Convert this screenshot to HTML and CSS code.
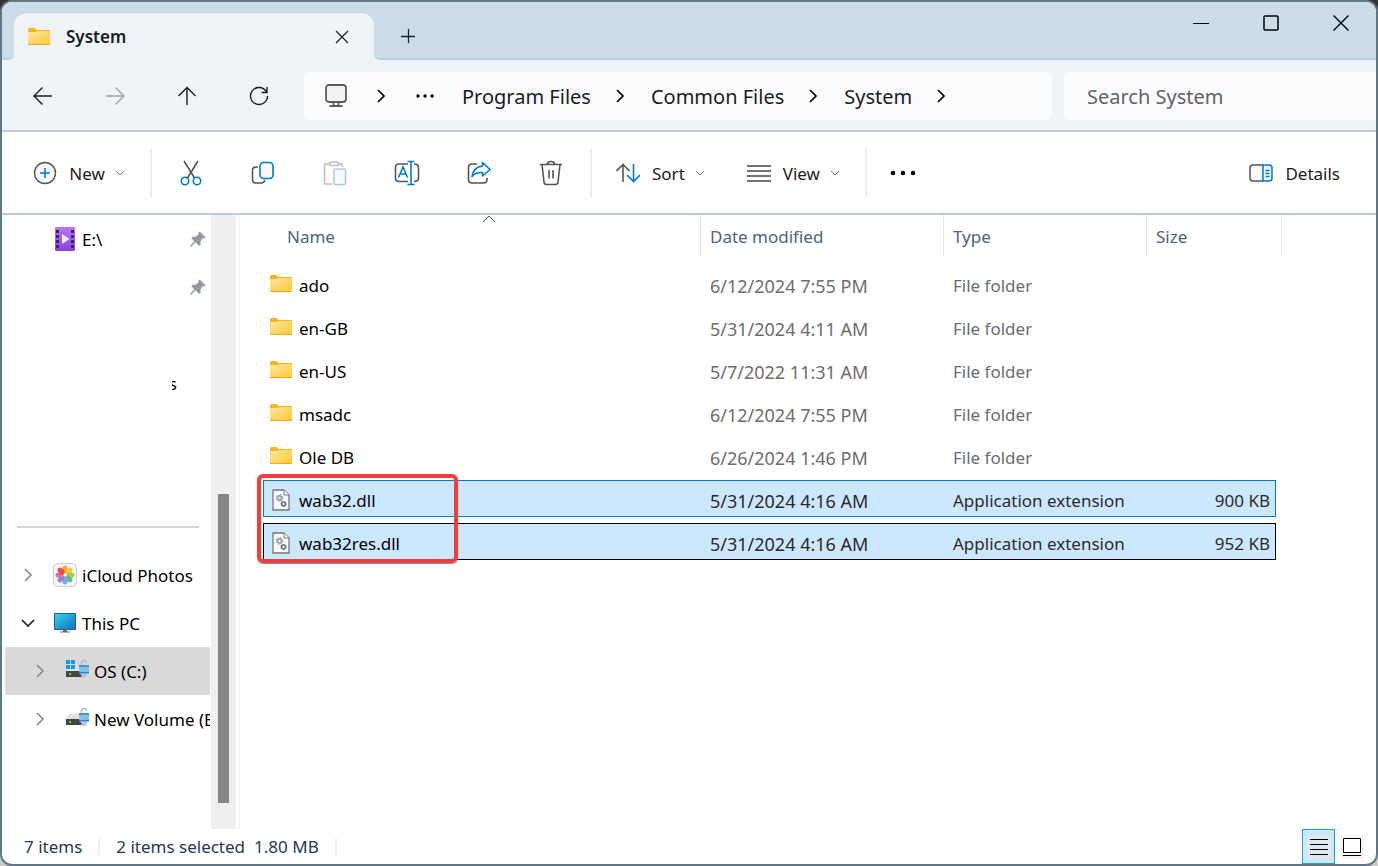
FILE: index.html
```html
<!DOCTYPE html>
<html lang="en">
<head>
    <meta charset="utf-8">
    <meta name="viewport" content="width=device-width, initial-scale=1.0">
    <title>System</title>
    <link rel="stylesheet" href="styles.css">
</head>

<body>
    <!-- shared icons -->
    <svg class="symbols" aria-hidden="true">
        <defs>
            <linearGradient id="folder-fill" x1="0" y1="0" x2="1" y2="1">
                <stop offset="0" stop-color="#ffe69f" />
                <stop offset="1" stop-color="#ffca38" />
            </linearGradient>
            <linearGradient id="screen-fill" x1="0" y1="0" x2="1" y2="1">
                <stop offset="0" stop-color="#34d5e8" />
                <stop offset="1" stop-color="#0d70c4" />
            </linearGradient>
            <linearGradient id="video-fill" x1="0" y1="0" x2="0" y2="1">
                <stop offset="0" stop-color="#b877f5" />
                <stop offset="1" stop-color="#8a42e4" />
            </linearGradient>
        </defs>
        <symbol id="folder" viewBox="0 0 24 18">
            <path d="M1 1.500Q1 0 2.500 0H7.500L9.500 2H23V5H1Z" fill="#f8b51b" />
            <path d="M1 4H8L10 3H23V16H1Z" fill="url(#folder-fill)" />
            <path d="M1 16.500H23" stroke="#efa91d" />
        </symbol>
        <symbol id="chevron" viewBox="0 0 14 14">
            <path d="M4 1L10 7L4 13" fill="none" stroke="currentColor" stroke-width="1.700" />
        </symbol>
        <symbol id="caret" viewBox="0 0 10 6">
            <path d="M1 1L5 5L9 1" fill="none" stroke="currentColor" />
        </symbol>
        <symbol id="pin" viewBox="0 0 16 16">
            <path d="M9.500 0.500L15.500 6L14 7.500L12.500 7.300L10.500 10.500L10.500 14L9 15L5.500 11.300L1.500 15.500L0.300 15.800L0.500 14.500L4.300 10.300L1.300 7L2.500 5.800L5.500 5.700L8.700 3.300L8.500 1.500Z" fill="#8f9ba3" />
        </symbol>
        <symbol id="dll" viewBox="0 0 18 22">
            <path d="M1 1H12L17 6V21H1Z" fill="#fbfbfb" stroke="#777" stroke-width="1.300" />
            <path d="M12 1V6H17" fill="#fff" stroke="#777" />
            <circle cx="7.500" cy="9" r="2" fill="none" stroke="#9aa5b0" stroke-width="1.800" />
            <circle cx="7.500" cy="9" r="3.300" fill="none" stroke="#9aa5b0" stroke-width="1.300" stroke-dasharray="1.400 1.200" />
            <circle cx="11.500" cy="15" r="1.900" fill="none" stroke="#66737c" stroke-width="1.500" />
            <circle cx="11.500" cy="15" r="2.800" fill="none" stroke="#66737c" stroke-width="0.800" stroke-dasharray="1.100 1.100" />
        </symbol>
        <symbol id="drive" viewBox="0 0 24 20">
            <path d="M4 7H18L21 12H1Z" fill="#dfe1e3" />
            <path d="M1 12H18V18H1Z" fill="#454545" />
            <rect x="4" y="14" width="2" height="2" fill="#35e02c" />
            <path d="M16.500 7V3.500Q16.500 1.500 18.500 1.500H19.500Q21.500 1.500 21.500 4" fill="none" stroke="#b3bfc8" stroke-width="1.600" />
            <path d="M14 6H24V14L22 15.500Q21.500 19 19 19Q16.500 19 16 15.500L14 14Z" fill="#b7c4cd" />
            <path d="M14 7H24M14 13.500H24" stroke="#1d86d5" stroke-width="1.400" />
            <path d="M14 8H24V12.500H14Z" fill="#82c0ea" />
        </symbol>
        <symbol id="tiles" viewBox="0 0 10 10">
            <path d="M0 0H4.500V4.500H0ZM5.500 0H10V4.500H5.500ZM0 5.500H4.500V10H0ZM5.500 5.500H10V10H5.500Z" fill="#149be5" />
        </symbol>
    </svg>

    <div class="window">
        <header class="titlebar">
            <div class="edge"></div>
            <div class="tab-holder">
                <div class="tab">
                    <svg class="folder"><use href="#folder" /></svg>
                    <span class="tab-title">System</span>
                    <button class="tab-close" aria-label="Close tab">
                        <svg width="14" height="14" viewBox="0 0 14 14"><path d="M1 1L13 13M13 1L1 13" stroke="#222" stroke-width="1.200" /></svg>
                    </button>
                </div>
            </div>
            <div class="strip">
                <button class="new-tab" aria-label="New tab">
                    <svg width="16" height="16" viewBox="0 0 16 16"><path d="M1 8.500H15M8.500 1V15" stroke="#222" stroke-width="1.300" /></svg>
                </button>
                <div class="controls">
                    <button aria-label="Minimize"><svg width="16" height="16" viewBox="0 0 16 16"><path d="M0 8.500H16" stroke="#000" /></svg></button>
                    <button aria-label="Maximize"><svg width="16" height="16" viewBox="0 0 16 16"><rect x="1" y="1" width="14" height="14" rx="1" fill="none" stroke="#000" stroke-width="1.500" /></svg></button>
                    <button aria-label="Close"><svg width="16" height="16" viewBox="0 0 16 16"><path d="M0.500 0.500L15.500 15.500M15.500 0.500L0.500 15.500" stroke="#000" stroke-width="1.400" /></svg></button>
                </div>
            </div>
        </header>

        <nav class="navbar">
            <div class="nav-buttons">
                <button aria-label="Back"><svg width="20" height="20" viewBox="0 0 20 20"><path d="M19 10H1M9.500 1.500L1 10L9.500 18.500" /></svg></button>
                <button aria-label="Forward" class="off"><svg width="20" height="20" viewBox="0 0 20 20"><path d="M1 10H19M10.500 1.500L19 10L10.500 18.500" /></svg></button>
                <button aria-label="Up"><svg width="20" height="20" viewBox="0 0 20 20"><path d="M10 19V1.500M1.500 10L10 1.500L18.500 10" /></svg></button>
                <button aria-label="Refresh"><svg width="20" height="20" viewBox="0 0 20 20"><path d="M17.500 6A8.500 8.500 0 1 0 18.500 10M18 1V6.500H12.500" /></svg></button>
            </div>
            <ul class="address">
                <li class="pc">
                    <svg width="24" height="24" viewBox="0 0 24 24"><rect x="2" y="1" width="20" height="17" rx="3" fill="#f3f3f3" stroke="#5c5c5c" stroke-width="1.800" /><path d="M9.500 18V21.500M14.500 18V21.500M5.500 22H18.500" stroke="#5c5c5c" stroke-width="1.800" /></svg>
                </li>
                <li class="sep"><svg class="chevron"><use href="#chevron" /></svg></li>
                <li class="dots"><svg width="18" height="4" viewBox="0 0 18 4"><circle cx="2" cy="2" r="1.700" /><circle cx="9" cy="2" r="1.700" /><circle cx="16" cy="2" r="1.700" /></svg></li>
                <li><a href="#">Program Files</a></li>
                <li class="sep"><svg class="chevron"><use href="#chevron" /></svg></li>
                <li><a href="#">Common Files</a></li>
                <li class="sep"><svg class="chevron"><use href="#chevron" /></svg></li>
                <li><a href="#">System</a></li>
                <li class="sep"><svg class="chevron"><use href="#chevron" /></svg></li>
            </ul>
            <input class="search" type="text" placeholder="Search System" aria-label="Search System">
        </nav>

        <div class="commands">
            <button class="new">
                <svg width="24" height="24" viewBox="0 0 24 24"><circle cx="12" cy="12" r="10.500" fill="#fafafa" stroke="#555" stroke-width="1.400" /><path d="M7 12H17M12 7V17" stroke="#0078d4" stroke-width="1.600" /></svg>
                <span>New</span>
                <svg class="caret"><use href="#caret" /></svg>
            </button>
            <div class="icons">
                <button aria-label="Cut"><svg width="26" height="26" viewBox="0 0 26 26" fill="none" stroke-width="1.600"><path d="M6 1L16.500 18M20 1L9.500 18" stroke="#555" /><circle cx="7" cy="21" r="3.700" stroke="#0078d4" /><circle cx="19" cy="21" r="3.700" stroke="#0078d4" /></svg></button>
                <button aria-label="Copy"><svg width="26" height="26" viewBox="0 0 26 26" fill="none" stroke-width="1.600"><path d="M8 7H6Q2.500 7 2.500 10.500V19.500Q2.500 23 6 23H11Q14.500 23 14.500 20" stroke="#555" /><rect x="10" y="2.500" width="13" height="16" rx="3.500" fill="#fafafa" stroke="#0078d4" /></svg></button>
                <button aria-label="Paste"><svg width="26" height="26" viewBox="0 0 26 26" fill="none" stroke-width="1.600"><path d="M7.500 4H2.500V24H10M16 4H20V7" stroke="#bdbdbd" /><rect x="7.500" y="2" width="9" height="3.500" rx="1.700" stroke="#bdbdbd" /><rect x="12" y="9" width="11.500" height="15.500" rx="1.500" fill="#fafafa" stroke="#9fccf0" /></svg></button>
                <button aria-label="Rename"><svg width="26" height="26" viewBox="0 0 26 26" fill="none" stroke-width="1.600"><path d="M14 4H5Q1.500 4 1.500 7.500V18Q1.500 21.500 5 21.500H14M20 4Q24.500 4 24.500 7.500V18Q24.500 21.500 20 21.500" stroke="#555" /><path d="M17 1.500V24.500M13.500 1.500H20.500M13.500 24.500H20.500M4.500 17.500L9 7L13.500 17.500M6 14H12" stroke="#0078d4" /></svg></button>
                <button aria-label="Share"><svg width="26" height="26" viewBox="0 0 26 26" fill="none" stroke-width="1.600" stroke-linejoin="round"><path d="M11 4H6Q2.500 4 2.500 7.500V19.500Q2.500 23 6 23H17.500Q21 23 21 19.500V18" stroke="#555" /><path d="M16.500 2.500L24 9.500L16.500 16V12.500Q9.500 12 6 16.500Q7.500 7 16.500 6Z" fill="#fff" stroke="#0078d4" /></svg></button>
                <button aria-label="Delete"><svg width="26" height="26" viewBox="0 0 26 26" fill="none" stroke="#555" stroke-width="1.600"><path d="M2 4.500H24M9.500 4Q9.500 1.500 13 1.500Q16.500 1.500 16.500 4M4 4.500L6 22Q6.300 24.500 8.500 24.500H17.500Q19.700 24.500 20 22L22 4.500M11 10V18.500M15 10V18.500" /></svg></button>
            </div>
            <div class="layout">
                <button>
                    <svg width="24" height="20" viewBox="0 0 24 20" fill="none" stroke-width="1.600"><path d="M7 19V1.500M0.500 8L7 1.500L13.500 8" stroke="#555" /><path d="M17.500 1V18.500M11 12L17.500 18.500L24 12" stroke="#0078d4" /></svg>
                    <span>Sort</span>
                    <svg class="caret"><use href="#caret" /></svg>
                </button>
                <button>
                    <svg width="24" height="18" viewBox="0 0 24 18"><path d="M0 2H24M0 7H24M0 12H24M0 17H24" stroke="#444" stroke-width="1.400" /></svg>
                    <span>View</span>
                    <svg class="caret"><use href="#caret" /></svg>
                </button>
            </div>
            <button class="more" aria-label="More"><svg width="26" height="6" viewBox="0 0 26 6"><circle cx="3" cy="3" r="2.300" /><circle cx="13" cy="3" r="2.300" /><circle cx="23" cy="3" r="2.300" /></svg></button>
            <button class="details">
                <svg width="24" height="18" viewBox="0 0 24 18" fill="none" stroke-width="1.500"><path d="M14 1H4Q1 1 1 4V14Q1 17 4 17H14" fill="#fafafa" stroke="#555" /><path d="M14 1H20Q23 1 23 4V14Q23 17 20 17H14ZM16.500 6.500H20.500M16.500 9.500H20.500M16.500 12.500H20.500" fill="#f2f9ff" stroke="#0078d4" /></svg>
                <span>Details</span>
            </button>
        </div>

        <div class="content">
            <aside class="sidebar">
                <ul class="tree">
                    <li class="sub-none">
                        <svg class="icon" viewBox="0 0 24 24"><rect x="2" width="20" height="24" rx="1" fill="url(#video-fill)" /><path d="M3 3H6V6H3ZM3 8H6V11H3ZM3 13H6V16H3ZM3 18H6V21H3ZM18 3H21V6H18ZM18 8H21V11H18ZM18 13H21V16H18ZM18 18H21V21H18Z" fill="#3b2664" /><path d="M9 7L16.500 12L9 17Z" fill="#f1edf5" /></svg>
                        <span>E:\</span>
                        <svg class="pin"><use href="#pin" /></svg>
                    </li>
                    <li><svg class="pin"><use href="#pin" /></svg></li>
                    <li></li>
                    <li><span class="cut">s</span></li>
                    <li></li>
                    <li></li>
                    <li class="divider"></li>
                    <li>
                        <svg class="chevron"><use href="#chevron" /></svg>
                        <svg class="icon" viewBox="0 0 24 24">
                            <rect x="0.700" y="0.700" width="22.600" height="22.600" rx="4" fill="#fafafa" stroke="#c8c8c8" />
                            <g opacity="0.900">
                                <ellipse cx="12" cy="6.500" rx="2.700" ry="4" fill="#f99a1c" />
                                <ellipse cx="12" cy="6.500" rx="2.700" ry="4" fill="#e3d31b" transform="rotate(45 12 12)" />
                                <ellipse cx="12" cy="6.500" rx="2.700" ry="4" fill="#a6cc3a" transform="rotate(90 12 12)" />
                                <ellipse cx="12" cy="6.500" rx="2.700" ry="4" fill="#4fb783" transform="rotate(135 12 12)" />
                                <ellipse cx="12" cy="6.500" rx="2.700" ry="4" fill="#6ba7dd" transform="rotate(180 12 12)" />
                                <ellipse cx="12" cy="6.500" rx="2.700" ry="4" fill="#8d79c4" transform="rotate(225 12 12)" />
                                <ellipse cx="12" cy="6.500" rx="2.700" ry="4" fill="#c76aaa" transform="rotate(270 12 12)" />
                                <ellipse cx="12" cy="6.500" rx="2.700" ry="4" fill="#ee3b30" transform="rotate(315 12 12)" />
                            </g>
                        </svg>
                        <span>iCloud Photos</span>
                    </li>
                    <li>
                        <svg class="chevron open" viewBox="0 0 14 14"><path d="M1 4L7 10L13 4" fill="none" stroke="currentColor" stroke-width="1.700" /></svg>
                        <svg class="icon" viewBox="0 0 24 24"><path d="M10 18H14V20.500H17V21.500H7V20.500H10Z" fill="#5f6b74" /><rect x="1.500" y="2.500" width="21" height="16" fill="url(#screen-fill)" stroke="#33617a" /></svg>
                        <span>This PC</span>
                    </li>
                    <li class="sub current">
                        <svg class="chevron"><use href="#chevron" /></svg>
                        <svg class="icon" viewBox="0 0 24 24"><use href="#drive" width="24" height="20" /><use href="#tiles" x="1" y="1" width="9" height="9" /></svg>
                        <span>OS (C:)</span>
                    </li>
                    <li class="sub">
                        <svg class="chevron"><use href="#chevron" /></svg>
                        <svg class="icon" viewBox="0 0 24 24"><use href="#drive" width="24" height="20" /></svg>
                        <span>New Volume (E:)</span>
                    </li>
                </ul>
                <div class="scrollbar"><div class="thumb"></div></div>
            </aside>

            <main class="files">
                <table>
                    <colgroup>
                        <col>
                        <col class="col-date">
                        <col class="col-type">
                        <col class="col-size">
                    </colgroup>
                    <thead>
                        <tr>
                            <th class="name"><div>Name</div><svg class="sorted" viewBox="0 0 14 8"><path d="M1 7L7 1L13 7" fill="none" stroke="#555" /></svg></th>
                            <th><div>Date modified</div></th>
                            <th><div>Type</div></th>
                            <th class="size"><div>Size</div></th>
                        </tr>
                    </thead>
                    <tbody>
                        <tr>
                            <td><div class="file"><svg class="folder"><use href="#folder" /></svg>ado</div></td>
                            <td class="date">6/12/2024 7:55 PM</td>
                            <td>File folder</td>
                            <td></td>
                        </tr>
                        <tr>
                            <td><div class="file"><svg class="folder"><use href="#folder" /></svg>en-GB</div></td>
                            <td class="date">5/31/2024 4:11 AM</td>
                            <td>File folder</td>
                            <td></td>
                        </tr>
                        <tr>
                            <td><div class="file"><svg class="folder"><use href="#folder" /></svg>en-US</div></td>
                            <td class="date">5/7/2022 11:31 AM</td>
                            <td>File folder</td>
                            <td></td>
                        </tr>
                        <tr>
                            <td><div class="file"><svg class="folder"><use href="#folder" /></svg>msadc</div></td>
                            <td class="date">6/12/2024 7:55 PM</td>
                            <td>File folder</td>
                            <td></td>
                        </tr>
                        <tr>
                            <td><div class="file"><svg class="folder"><use href="#folder" /></svg>Ole DB</div></td>
                            <td class="date">6/26/2024 1:46 PM</td>
                            <td>File folder</td>
                            <td></td>
                        </tr>
                        <tr class="selected">
                            <td><div class="file"><svg class="dll"><use href="#dll" /></svg>wab32.dll</div><div class="marker"></div></td>
                            <td class="date">5/31/2024 4:16 AM</td>
                            <td>Application extension</td>
                            <td>900 KB</td>
                        </tr>
                        <tr class="selected focused">
                            <td><div class="file"><svg class="dll"><use href="#dll" /></svg>wab32res.dll</div></td>
                            <td class="date">5/31/2024 4:16 AM</td>
                            <td>Application extension</td>
                            <td>952 KB</td>
                        </tr>
                    </tbody>
                </table>
            </main>
        </div>

        <footer class="status">
            <span class="count">7 items</span>
            <span class="count picked"><span>2 items selected</span><span>1.80 MB</span></span>
            <div class="views">
                <button class="active" aria-label="Details view"><svg width="24" height="24" viewBox="0 0 24 24"><rect width="24" height="24" rx="3" fill="#e2e9ee" /><path d="M3 4.500H21M3 9.500H21M3 14.500H21M3 19.500H21" stroke="#000" /></svg></button>
                <button aria-label="Large icons view"><svg width="24" height="24" viewBox="0 0 24 24"><rect width="24" height="24" rx="3" fill="#f3f3f3" /><path d="M3.500 3.500H20.500V17.500H3.500ZM3 20.500H21" fill="#fff" stroke="#000" /></svg></button>
            </div>
        </footer>
    </div>
</body></html>
```
FILE: styles.css
```css
* {
    box-sizing: border-box;
}

body {
    margin: 0;
    background: linear-gradient(#333 50%, #ccc 50%);
    font-family: "Noto Sans", "Open Sans", sans-serif;
    font-size: 17px;
    line-height: 24px;
    color: #000;
}

ul {
    list-style: none;
    margin: 0;
    padding: 0;
}

button {
    display: flex;
    align-items: center;
    justify-content: center;
    padding: 0;
    border: 0;
    background: none;
    font: inherit;
    color: #1b1b1b;
}

svg {
    flex: none;
    display: block;
}

.symbols {
    position: absolute;
    width: 0;
    height: 0;
}

.window {
    display: flex;
    flex-direction: column;
    min-height: 100vh;
    border: 2px solid #627783;
    border-radius: 12px;
    background: #fff;
    overflow: hidden;
}

.folder {
    width: 24px;
    height: 18px;
}

.chevron {
    width: 14px;
    height: 14px;
}

.caret {
    width: 10px;
    height: 6px;
    color: #777;
}

/* title bar */
.titlebar {
    display: flex;
    height: 58px;
    background: #eff4f9;
}

.edge {
    width: 12px;
    background: #cbddeb;
    border-bottom: 2px solid #bccddc;
    border-bottom-right-radius: 6px;
}

.tab-holder {
    width: 360px;
    padding-top: 11px;
    background: linear-gradient(#cbddeb 50%, #eff4f9 50%);
}

.tab {
    display: flex;
    align-items: center;
    height: 47px;
    padding: 0 25px 0 13px;
    background: #eff4f9;
    border-radius: 12px 12px 0 0;
    box-shadow: 0 -1px 1px #c0d0de;
}

.tab-title {
    flex: 1;
    margin-left: 15px;
    font-weight: 600;
    color: #1b1b1b;
}

.strip {
    flex: 1;
    display: flex;
    justify-content: space-between;
    background: #cbddeb;
    border-bottom: 2px solid #bccddc;
    border-bottom-left-radius: 6px;
}

.new-tab {
    width: 68px;
    padding-top: 12px;
}

.controls {
    display: flex;
    height: 42px;
}

.controls button {
    width: 70px;
}

/* navigation and address */
.navbar {
    display: flex;
    align-items: center;
    height: 72px;
    padding: 2px 0 0 5px;
    background: #eff4f9;
    border-bottom: 2px solid #bccbd9;
}

.nav-buttons {
    display: flex;
    margin-right: 9px;
}

.nav-buttons button {
    width: 72px;
    height: 48px;
}

.nav-buttons path {
    fill: none;
    stroke: #1b1b1b;
    stroke-width: 1.4;
}

.nav-buttons .off path {
    stroke: #a0a4a8;
}

.address {
    flex: 1;
    display: flex;
    align-items: center;
    height: 48px;
    padding-left: 20px;
    margin-right: 12px;
    background: #fbfcfe;
    border-radius: 6px;
    font-size: 20px;
}

.address a {
    display: block;
    padding-top: 2px;
    color: #1b1b1b;
    text-decoration: none;
}

.address .sep {
    margin: 0 24px 0 22px;
}

.address .pc + .sep {
    margin: 0 28px 0 26px;
}

.dots {
    margin-right: 28px;
}

.search {
    width: 312px;
    height: 48px;
    padding: 0 23px;
    border: 0;
    border-radius: 6px 0 0 6px;
    background: #fbfcfe;
    font: inherit;
    font-size: 20px;
}

.search::placeholder {
    color: #626262;
    opacity: 1;
}

/* command bar */
.commands {
    display: flex;
    align-items: center;
    height: 83px;
    border-bottom: 2px solid #bccbd9;
}

.commands > * {
    height: 48px;
}

.commands span {
    padding-top: 2px;
}

.new {
    width: 150px;
    padding-left: 6px;
    gap: 12px;
    border-right: 2px solid #ececec;
}

.commands .caret {
    margin-left: -2px;
}

.icons {
    display: flex;
    padding: 0 3px;
    border-right: 2px solid #ececec;
}

.icons button {
    width: 72px;
}

.layout {
    display: flex;
    gap: 42px;
    padding: 0 25px 0 24px;
    border-right: 2px solid #ececec;
}

.layout button {
    gap: 12px;
}

.more {
    width: 72px;
}

.details {
    gap: 12px;
    margin-left: auto;
    margin-right: 36px;
}

/* sidebar */
.content {
    flex: 1;
    display: flex;
}

.sidebar {
    display: flex;
    width: 238px;
    padding-right: 2px;
    border-right: 2px solid #f5f5f5;
}

.tree {
    flex: 1;
    min-width: 0;
    padding-left: 3px;
    margin-right: 1px;
}

.tree li {
    display: flex;
    align-items: center;
    height: 48px;
    padding-left: 16px;
    overflow: hidden;
    white-space: nowrap;
    border-radius: 2px;
}

.tree .sub {
    padding-left: 28px;
}

.tree .sub-none {
    padding-left: 48px;
}

.tree span {
    padding-top: 2px;
}

.tree .chevron {
    margin-right: 18px;
    color: #8a8a8a;
}

.tree .open {
    color: #222;
}

.tree .icon {
    width: 24px;
    height: 24px;
    margin-right: 5px;
}

.tree .current {
    background: #d9d9d9;
}

.pin {
    width: 16px;
    height: 16px;
    margin-left: auto;
    margin-right: 4px;
}

.cut {
    display: flex;
    justify-content: flex-end;
    width: 5px;
    margin-left: 151px;
    overflow: hidden;
}

.tree .divider::before {
    content: "";
    width: 182px;
    height: 2px;
    margin-left: -4px;
    background: #d4d4d4;
}

.scrollbar {
    width: 25px;
    padding: 279px 7px 0;
    background: #efefef;
}

.thumb {
    height: 309px;
    background: #868686;
}

/* file list */
.files {
    flex: 1;
    padding: 0 100px 0 23px;
}

table {
    width: 100%;
    margin-top: -6px;
    table-layout: fixed;
    border-spacing: 0 6px;
}

.col-date {
    width: 243px;
}

.col-type {
    width: 203px;
}

.col-size {
    width: 129px;
}

th {
    height: 44px;
    padding: 0;
    vertical-align: top;
    text-align: left;
    font-weight: normal;
    color: #4c6480;
}

th div {
    height: 41px;
    padding: 10px 9px 0;
    border-right: 1px solid #e2e2e2;
}

.name {
    position: relative;
}

.name div {
    padding-left: 24px;
}

.sorted {
    position: absolute;
    top: 0;
    left: 50%;
    width: 14px;
    height: 8px;
}

.size div {
    margin-right: -6px;
}

td {
    height: 37px;
    padding: 4px 9px 0;
    color: #6d6d6d;
    border: 1px solid transparent;
    border-width: 1px 0;
    white-space: nowrap;
}

td:first-child {
    padding-left: 5px;
    color: #000;
    border-left-width: 1px;
}

td:last-child {
    padding-right: 5px;
    text-align: right;
    border-right-width: 1px;
}

.date {
    font-size: 18px;
}

.file {
    display: flex;
    align-items: center;
    gap: 6px;
}

.file svg {
    margin-bottom: 4px;
}

.file .dll {
    width: 18px;
    height: 22px;
    margin: 0 3px 2px;
}

.selected td {
    position: relative;
    background: #cce8ff;
    border-color: #0078d4;
    color: #2b2b2b;
}

.selected td:first-child {
    color: #000;
}

.focused td {
    border-color: #000;
}

.marker {
    position: absolute;
    z-index: 1;
    top: -7px;
    left: -7px;
    width: 201px;
    height: 89px;
    border: 4px solid #f03e3e;
    border-radius: 6px;
    box-shadow: 0 1px 1px #888;
}

/* status bar */
.status {
    display: flex;
    align-items: center;
    height: 35px;
    padding-left: 22px;
    color: #1e395b;
}

.count {
    padding-right: 16px;
    margin-right: 16px;
    border-right: 2px solid #f0f0f0;
    line-height: 17px;
}

.picked {
    display: flex;
    gap: 9px;
}

.views {
    display: flex;
    height: 35px;
    margin-left: auto;
    margin-right: 8px;
}

.views button {
    width: 33px;
}

.views .active {
    border: 1px solid #26a0da;
    background: #cbe8f6;
}
```
